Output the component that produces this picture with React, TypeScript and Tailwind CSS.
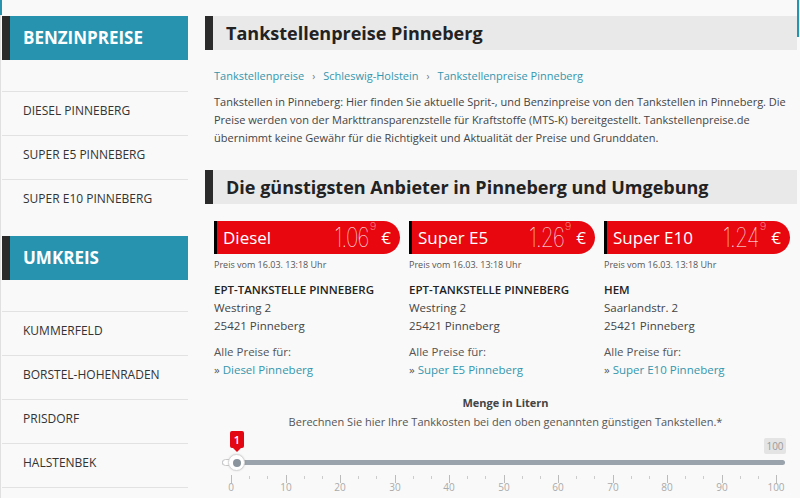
import React from "react";

const teal = "text-[#3596ad]";

function SideHeader({ title }: { title: string }) {
  return (
    <div className="h-[44px] bg-[#2893af] border-l-8 border-[#2b2b2b] pl-[13px] flex items-center text-white font-bold text-[17px] uppercase">
      {title}
    </div>
  );
}

function SideItem({ label }: { label: string }) {
  return (
    <div className="h-[44px] border-t border-[#e2e2e2] flex items-center pl-[21px] pb-[5px] text-[12px] text-[#333] uppercase">
      {label}
    </div>
  );
}

function Heading({ children }: { children: React.ReactNode }) {
  return (
    <div className="h-[34px] bg-[#e9e9e9] border-l-8 border-[#2b2b2b] pl-[13px] flex items-center text-[18px] font-bold text-[#222]">
      {children}
    </div>
  );
}

type Card = {
  fuel: string;
  price: string;
  name: string;
  street: string;
  link: string;
};

const cards: Card[] = [
  { fuel: "Diesel", price: "1.06", name: "EPT-TANKSTELLE PINNEBERG", street: "Westring 2", link: "Diesel Pinneberg" },
  { fuel: "Super E5", price: "1.26", name: "EPT-TANKSTELLE PINNEBERG", street: "Westring 2", link: "Super E5 Pinneberg" },
  { fuel: "Super E10", price: "1.24", name: "HEM", street: "Saarlandstr. 2", link: "Super E10 Pinneberg" },
];

function PriceCard({ c }: { c: Card }) {
  return (
    <div className="flex flex-col">
      <div className="h-[33px] bg-[#e8060f] border-l-[3px] border-black rounded-r-full flex items-center justify-between pl-[6px] pr-[9px] text-white">
        <span className="text-[17px] leading-none">{c.fuel}</span>
        <span className="flex items-center">
          <span className="inline-block origin-right scale-x-[0.78] font-['Inter',sans-serif] font-thin text-[27px] leading-none tracking-[-1px]">
            {c.price}
          </span>
          <span className="font-['Inter',sans-serif] font-thin text-[11px] leading-none self-start mt-[-3px] ml-[1px]">9</span>
          <span className="text-[17px] leading-none ml-[5px]">€</span>
        </span>
      </div>
      <div className="mt-[5px] text-[9px] leading-[12px] text-[#555]">Preis vom 16.03. 13:18 Uhr</div>
      <div className="mt-[10px] text-[11.5px] leading-[18px] font-semibold text-[#222]">{c.name}</div>
      <div className="text-[11.5px] leading-[18px] text-[#444]">{c.street}</div>
      <div className="text-[11.5px] leading-[18px] text-[#444]">25421 Pinneberg</div>
      <div className="mt-[8px] text-[11.5px] leading-[18px] text-[#555]">Alle Preise für:</div>
      <div className="text-[11.5px] leading-[18px]">
        <span className="text-[#555]">» </span>
        <span className={teal}>{c.link}</span>
      </div>
    </div>
  );
}

function Slider() {
  const x0 = 26; // value 0 position (local)
  const scale = 5.45;
  const ticks: { x: number; major: boolean }[] = [];
  for (let i = 0; i <= 30; i++) {
    const v = (i * 10) / 3;
    ticks.push({ x: x0 + v * scale, major: i % 3 === 0 });
  }
  const labels = [0, 10, 20, 30, 40, 50, 60, 70, 80, 90, 100];
  return (
    <div className="relative w-full h-[68px]">
      {/* track */}
      <div className="absolute left-[17px] top-[29px] w-[563px] h-[5px] rounded-full bg-[#9aa3ab]" />
      <div className="absolute left-[17px] top-[28px] w-[16px] h-[7px] rounded-l-full bg-white border border-[#c8c8c8]" />
      {/* tooltip */}
      <div className="absolute left-[25px] top-0 w-[14px] h-[17px] bg-[#e30613] rounded-[2px] flex items-center justify-center text-white text-[11px] font-semibold leading-none">
        1
      </div>
      <div className="absolute left-[28px] top-[17px] w-0 h-0 border-l-[4px] border-r-[4px] border-t-[4px] border-l-transparent border-r-transparent border-t-[#e30613]" />
      {/* handle */}
      <div className="absolute left-[23px] top-[23px] w-[17px] h-[17px] rounded-full bg-white border border-[#d5d5d5] shadow-[0_0_2px_rgba(0,0,0,0.15)] flex items-center justify-center">
        <div className="w-[8px] h-[8px] rounded-full bg-[#8a949c]" />
      </div>
      {/* max label */}
      <div className="absolute left-[559px] top-[7px] w-[22px] h-[16px] bg-[#e4e4e4] rounded-[2px] flex items-center justify-center text-[10px] text-[#9a9a9a] leading-none">
        100
      </div>
      {/* ticks */}
      {ticks.map((t, i) => (
        <div
          key={i}
          className={t.major ? "absolute top-[44px] w-px h-[8px] bg-[#bbb]" : "absolute top-[45px] w-px h-[3px] bg-[#ccc]"}
          style={{ left: Math.round(t.x) }}
        />
      ))}
      {labels.map((v) => (
        <div
          key={v}
          className="absolute top-[50px] w-[30px] -ml-[15px] text-center text-[10px] leading-[12px] text-[#aaa]"
          style={{ left: Math.round(x0 + v * scale) }}
        >
          {v}
        </div>
      ))}
    </div>
  );
}

export default function App() {
  return (
    <div className="relative flex w-[800px] h-[498px] overflow-hidden bg-[#f9f9f9] pt-4 font-['Open_Sans',sans-serif] text-[#333]">
      <div className="absolute left-0 top-0 w-[2px] h-[15px] bg-[#2893af]" />
      <div className="absolute left-0 top-[15px] w-px h-[483px] bg-[#e0e0e0]" />
      <div className="absolute right-[1px] top-0 w-[2px] h-[37px] bg-[#2893af]" />

      <aside className="ml-[2px] w-[186px] shrink-0">
        <SideHeader title="Benzinpreise" />
        <div className="h-[31px]" />
        <SideItem label="Diesel Pinneberg" />
        <SideItem label="Super E5 Pinneberg" />
        <SideItem label="Super E10 Pinneberg" />
        <div className="h-[13px]" />
        <SideHeader title="Umkreis" />
        <div className="h-[31px]" />
        <SideItem label="Kummerfeld" />
        <SideItem label="Borstel-Hohenraden" />
        <SideItem label="Prisdorf" />
        <SideItem label="Halstenbek" />
        <div className="h-[11px] border-t border-[#e2e2e2]" />
      </aside>

      <main className="ml-[17px] w-[592px] shrink-0">
        <Heading>Tankstellenpreise Pinneberg</Heading>
        <div className="mt-[17px] pl-[9px] text-[11px] leading-[18px] flex items-center">
          <span className={teal}>Tankstellenpreise</span>
          <span className="mx-[8px] text-[#777] text-[10px]">›</span>
          <span className={teal}>Schleswig-Holstein</span>
          <span className="mx-[8px] text-[#777] text-[10px]">›</span>
          <span className={teal}>Tankstellenpreise Pinneberg</span>
        </div>
        <p className="mt-[8px] pl-[9px] pr-[4px] text-[11px] leading-[18px] text-[#444]">
          Tankstellen in Pinneberg: Hier finden Sie aktuelle Sprit-, und Benzinpreise von den Tankstellen in Pinneberg. Die
          Preise werden von der Markttransparenzstelle für Kraftstoffe (MTS-K) bereitgestellt. Tankstellenpreise.de
          übernimmt keine Gewähr für die Richtigkeit und Aktualität der Preise und Grunddaten.
        </p>
        <div className="mt-[23px]">
          <Heading>Die günstigsten Anbieter in Pinneberg und Umgebung</Heading>
        </div>
        <div className="mt-[17px] pl-[9px] grid grid-cols-[186px_186px_186px] gap-x-[9px]">
          {cards.map((c, i) => (
            <PriceCard key={i} c={c} />
          ))}
        </div>
        <div className="mt-[16px] pl-[9px] text-center text-[11px] leading-[16px] font-bold text-[#444]">Menge in Litern</div>
        <div className="mt-[2px] pl-[9px] text-center text-[11px] leading-[18px] text-[#555]">
          Berechnen Sie hier Ihre Tankkosten bei den oben genannten günstigen Tankstellen.*
        </div>
        <Slider />
      </main>
    </div>
  );
}
